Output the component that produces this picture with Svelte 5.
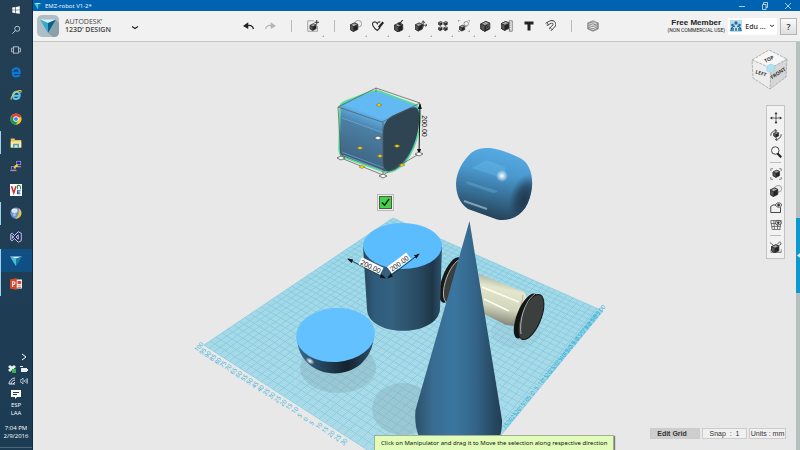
<script>
  const apps = [
    { name: "Edge", icon: "edge" },
    { name: "Internet Explorer", icon: "ie" },
    { name: "Chrome", icon: "chrome" },
    { name: "File Explorer", icon: "folder", running: true },
    { name: "PuTTY", icon: "putty" },
    { name: "VNC Viewer", icon: "vnc" },
    { name: "Browser", icon: "ball", running: true },
    { name: "Visual Studio", icon: "vs" },
    { name: "123D Design", icon: "design", running: true, active: true },
    { name: "PowerPoint", icon: "ppt", running: true },
  ];

  const tools = [
    { name: "Undo", icon: "undo" },
    { name: "Redo", icon: "redo" },
    null,
    { name: "Transform", icon: "insert", menu: true },
    null,
    { name: "Primitives", icon: "primitives", menu: true },
    { name: "Sketch", icon: "sketch", menu: true },
    { name: "Construct", icon: "construct", menu: true },
    { name: "Modify", icon: "modify", menu: true },
    { name: "Pattern", icon: "pattern", menu: true },
    { name: "Grouping", icon: "group", menu: true },
    { name: "Combine", icon: "combine", menu: true },
    { name: "Measure", icon: "measure" },
    { name: "Text", icon: "text" },
    { name: "Snap", icon: "magnet" },
    null,
    { name: "Material", icon: "material" },
  ];

  const views = [
    { name: "Pan", icon: "pan" },
    { name: "Orbit", icon: "orbit" },
    { name: "Zoom", icon: "zoom" },
    null,
    { name: "Fit", icon: "fit" },
    { name: "Shading", icon: "primitives" },
    { name: "Show sketches", icon: "eye" },
    { name: "Grid visibility", icon: "gridview" },
    null,
    { name: "Snap to grid", icon: "snapview" },
  ];

  // corners of the work plane on screen: back, right, front, left
  const quad = [[393, 218], [603, 311], [447, 501], [204, 345]];

  // projective map from the unit square to the quad
  function project(u, v) {
    const [[x0, y0], [x1, y1], [x2, y2], [x3, y3]] = quad;
    const dx1 = x1 - x2, dx2 = x3 - x2, sx = x0 - x1 + x2 - x3;
    const dy1 = y1 - y2, dy2 = y3 - y2, sy = y0 - y1 + y2 - y3;
    const det = dx1 * dy2 - dx2 * dy1;
    const g = (sx * dy2 - dx2 * sy) / det;
    const h = (dx1 * sy - sx * dy1) / det;
    const w = g * u + h * v + 1;
    return [
      ((x1 - x0 + g * x1) * u + (x3 - x0 + h * x3) * v + x0) / w,
      ((y1 - y0 + g * y1) * u + (y3 - y0 + h * y3) * v + y0) / w,
    ];
  }

  function gridPath(count, skip) {
    let d = "";
    for (let i = 0; i <= count; i++) {
      if (skip && i % skip === 0) continue;
      const t = i / count;
      d += `M${project(t, 0)}L${project(t, 1)}M${project(0, t)}L${project(1, t)}`;
    }
    return d;
  }

  const minor = gridPath(160, 4);
  const major = gridPath(40);

  const ticks = [];
  for (let i = 0; i <= 40; i++) {
    const label = Math.abs(100 - i * 5);
    const [ax, ay] = project(i / 40, 1);
    const [bx, by] = project(1, i / 40);
    if (ay < 440) ticks.push({ label, x: ax - 7, y: ay + 7, angle: -48 });
    if (by < 428) ticks.push({ label, x: bx - 4, y: by + 4, angle: -50 });
  }

  const yellow = [[379, 105], [360, 148], [380, 156], [397, 146], [402, 165], [362, 167]];
  const corners = [[378, 138], [341, 158], [383, 176], [419, 154]];
</script>

{#snippet cube(x, y, s)}
  <g transform="translate({x} {y}) scale({s})">
    <path d="M0 3 6 0 11 2 11 9 5 12 0 9Z" fill="#222" />
    <path d="M0 3 6 0 11 2 5 5Z" fill="#aaa" />
    <path d="M0 3 5 5 5 12 0 9Z" fill="#555" />
  </g>
{/snippet}

{#snippet icon(name)}
  <svg class="icon" viewBox="0 0 16 16" fill="none" stroke="#333" aria-hidden="true">
    {#if name === "start"}
      <path fill="#fff" stroke="none" d="M2 4 7 3V7.600H2ZM8 3 14 2V7.600H8ZM2 8.400H7V13L2 12ZM8 8.400H14V14L8 13Z" />
    {:else if name === "search"}
      <g stroke="#d8e0e6" stroke-width="1.300"><circle cx="10" cy="6" r="4" /><path d="M7 9 2 14" /></g>
    {:else if name === "tasks"}
      <g stroke="#d8e0e6" stroke-width="1.200"><rect x="4" y="3" width="8" height="10" /><path d="M3 5H1V11H3M13 5H15V11H13" /></g>
    {:else if name === "edge"}
      <path d="M3 9H13C13 1 5 2 3 7M4 8C3 15 9 15 13 12" stroke="#0a78d7" stroke-width="3" />
    {:else if name === "ie"}
      <path d="M4 9H13C13 2 4 2 4 8.500S10 14 13 11" stroke="#5ac8f2" stroke-width="2.600" />
      <path d="M2 14C-1 12 9 1 14 2C16 3 14 5 14 5" stroke="#f5c83a" stroke-width="1.400" />
    {:else if name === "chrome"}
      <g stroke="none">
        <circle cx="8" cy="8" r="7.500" fill="#f2c52c" />
        <path fill="#db4437" d="M1.500 4.300A7.500 7.500 0 0 1 15 5.500H8L5 10Z" />
        <path fill="#179c52" d="M1.500 4.300A7.500 7.500 0 0 0 7.500 15.500L11 10H6Z" />
        <circle cx="8" cy="8" r="3.600" fill="#fff" /><circle cx="8" cy="8" r="2.700" fill="#4285f4" />
      </g>
    {:else if name === "folder"}
      <g stroke="none"><path fill="#e8c35a" d="M1 2H6L7 4H15V14H1Z" /><path fill="#ffe9a0" d="M1 6H15V14H1Z" /><path fill="#2ea6de" d="M4 9H12V14H10V11H6V14H4Z" /></g>
    {:else if name === "putty"}
      <g stroke="#222" stroke-width=".6" fill="#bcbcc4">
        <rect x="8" y="1" width="7" height="6" /><rect x="1" y="8" width="7" height="5" /><path d="M7 8H15V10H7ZM0 13H9V15H0Z" />
      </g>
      <path fill="#2026b8" stroke="none" d="M9 2H14V6H9ZM2 9H7V12H2Z" /><path stroke="#f4e22a" stroke-width="1.500" d="M10 6 7 8 9 8 5 11" />
    {:else if name === "vnc"}
      <rect x="0" y="0" width="16" height="16" fill="#fff" stroke="none" />
      <path stroke="#d92b2b" stroke-width="2" d="M2 3 5 12 8 3" /><path stroke="#2a9d46" stroke-width="1.500" d="M10 7V2C14 1 14 3 14 7" /><path stroke="#2650b8" stroke-width="1.500" d="M14 9H10V13H14M10 11H13" />
    {:else if name === "ball"}
      <g stroke="none"><circle cx="8" cy="8" r="7.500" fill="#6f93d0" /><path fill="#f0c62e" d="M12 2C17 6 16 15 7 15.500C12 12 12 8 12 2Z" /><ellipse cx="6" cy="5" rx="4" ry="3" fill="#dce7f8" /><circle cx="6" cy="10" r="2" fill="#a9c0e8" /></g>
    {:else if name === "vs"}
      <path fill="#1c2864" stroke="#e6e9f4" stroke-width="1.100" d="M11 1 15 3V13L11 15 6 10 3 13 1 12V4L3 3 6 6ZM11 5 8 8 11 11ZM3 6V10L5 8Z" />
    {:else if name === "design"}
      <g stroke="none"><path fill="#d2f1fa" d="M0 2H16L8 5Z" /><path fill="#4bbfe0" d="M0 2 8 5V15Z" /><path fill="#107ea8" d="M16 2 8 5V15Z" /></g>
    {:else if name === "ppt"}
      <g stroke="none"><rect x="7" y="2" width="9" height="12" fill="#fff" /><path fill="#d8472b" d="M0 2 9 0V16L0 14ZM10 4H15V8H10ZM10 10H15V11H10ZM10 12H15V13H10Z" /></g>
      <path stroke="#fff" stroke-width="1.400" d="M3.500 12V5H5C7.500 5 7.500 9 3.500 9" />
    {:else if name === "undo" || name === "redo"}
      <g transform={name === "redo" ? "translate(16 0) scale(-1 1)" : undefined} stroke={name === "redo" ? "#b5b5b5" : "#222"}>
        <path stroke-width="1.700" d="M4 8C9 6 13 7 14 12" /><path fill={name === "redo" ? "#b5b5b5" : "#222"} stroke="none" d="M0 8 7 3V12Z" />
      </g>
    {:else if name === "insert"}
      <path d="M9 1H1V15H14V8" stroke="#888" />{@render cube(4, 5, 0.75)}<path stroke-width="1.300" d="M13 0V6M10 3H16" />
    {:else if name === "primitives"}
      <circle cx="11" cy="5" r="4.500" stroke="#888" fill="#eee" />{@render cube(0, 4, 0.95)}
    {:else if name === "sketch"}
      <path stroke-width="1.500" d="M7 14C2 11-1 5 2 3 5 1 7 5 7 5S9 1 11 3M7 14 11 10" /><path stroke="#222" stroke-width="3" d="M9 10 15 3" />
    {:else if name === "construct"}
      {@render cube(2, 4, 1)}<path stroke="#222" stroke-width="1.500" d="M8 6 13 0M8 3V6H11" />
    {:else if name === "modify"}
      {@render cube(0, 4, 0.9)}<path stroke="#222" d="M9 7H16M14 5 16 7 14 9M11 10V2M9 4 11 1 13 4" />
    {:else if name === "pattern"}
      {@render cube(2, 2, 0.45)}{@render cube(9, 2, 0.45)}{@render cube(2, 9, 0.45)}{@render cube(9, 9, 0.45)}
    {:else if name === "group"}
      {@render cube(2, 7, 0.65)}<circle cx="11" cy="5" r="3" stroke="#777" /><path stroke="#777" d="M0 3V0H3M13 0H16V3M0 13V16H3M13 16H16V13M8 10 12 8" />
    {:else if name === "combine"}
      {@render cube(1, 2, 1.100)}<path stroke="#999" stroke-width=".7" d="M9 8 12 6V10L9 12Z" />
    {:else if name === "measure"}
      {@render cube(0, 2, 1)}<path fill="#eee" stroke="#666" d="M11 1H15V15H11ZM11 4H13M11 7H13M11 10H13M11 13H13" />
    {:else if name === "text"}
      <path fill="#222" stroke="none" d="M2 2H14V6H10V14H6V6H2Z" />
    {:else if name === "magnet"}
      <path stroke="#444" stroke-width="4.500" d="M3 6 8 3C13 1 16 6 12 9L8 13" /><path stroke="#f4f4f4" stroke-width="2.500" d="M3 6 8 3C13 1 16 6 12 9L8 13" /><path stroke="#333" d="M4 3 6 7M8 10 11 13" />
    {:else if name === "material"}
      <path fill="#bbb" stroke="#666" stroke-width=".8" d="M1 4 8 1 15 4V12L8 15 1 12ZM1 4 8 7 15 4M1 7 8 9 15 6M1 9 8 12 15 8M1 11 8 14 15 10M4 3 11 6" />
    {:else if name === "pan"}
      <path d="M8 1V15M1 8H15" /><path fill="#333" stroke="none" d="M8 0 10 3H6ZM8 16 10 13H6ZM0 8 3 6V10ZM16 8 13 6V10Z" />
    {:else if name === "orbit"}
      {@render cube(5, 4, 0.6)}<path stroke-width="1.100" d="M1 9C1 5 4 2 8 2M15 7C15 11 12 14 8 14M6 0 9 2 7 4M10 16 7 14 9 12" />
    {:else if name === "zoom"}
      <circle cx="7" cy="6" r="5" stroke-width="1.200" fill="#fafafa" /><path stroke="#222" stroke-width="3" d="M10 10 15 15" />
    {:else if name === "fit"}
      {@render cube(4, 3, 0.8)}<path stroke="#666" d="M1 4V1H4M12 1H15V4M1 12V15H4M12 15H15V12" />
    {:else if name === "eye"}
      <path d="M1 14V6L4 4H7M14 7V14H1" stroke-width="1.200" /><path fill="#ddd" d="M7 4C9 0 14 0 16 4C14 8 9 8 7 4Z" /><circle cx="11.500" cy="4" r="1.500" fill="#333" />
    {:else if name === "gridview"}
      <path stroke="#555" d="M1 2H15M1 6H15M2 10H14M3 14H14M1 2 3 14M5 2 6 14M10 2V14M15 2 13 14" /><ellipse cx="11" cy="5" rx="4" ry="3" fill="#ddd" /><circle cx="11" cy="5" r="1.200" fill="#333" />
    {:else if name === "snapview"}
      {@render cube(2, 5, 0.9)}<path d="M0 1V4M2 3 4 6M9 5 13 1 15 4 11 7ZM1 15H15" /><path stroke="#777" d="M0 11V15M15 11V15" />
    {/if}
  </svg>
{/snippet}

<div class="desktop">
  <aside class="taskbar">
    <div class="system">
      <button aria-label="Start">{@render icon("start")}</button>
      <button aria-label="Search">{@render icon("search")}</button>
      <button aria-label="Task view">{@render icon("tasks")}</button>
    </div>
    <div class="apps">
      {#each apps as app}
        <button class:running={app.running} class:active={app.active} aria-label={app.name}>
          {@render icon(app.icon)}
        </button>
      {/each}
    </div>
    <div class="tray">
      <svg class="more" viewBox="0 0 8 8"><path d="M2 1 6 4 2 7" fill="none" stroke="#fff" /></svg>
      <div class="status">
        <svg viewBox="0 0 8 8">
          <path fill="#e8eef2" d="M0 2 2 0 4 1.500 6 0 8 2 6 3.500 8 5 6 7 4 5 2 7 0 5 2 3.500Z" /><rect x="4" y="4" width="4" height="4" fill="#38b54a" />
        </svg>
        <svg viewBox="0 0 8 8"><path fill="#e8eef2" d="M1 3H7V4H8V6H7V7H1ZM0 1H3V2H0Z" /></svg>
        <svg viewBox="0 0 8 8"><path fill="none" stroke="#dde5ea" d="M1 7C1 4 4 1 7 1M3 7C3 5 5 3 7 3M5 7 7 5M1 7H7" /></svg>
        <svg viewBox="0 0 8 8"><path fill="none" stroke="#dde5ea" stroke-width=".7" d="M0 3H1L3 1V7L1 5H0ZM4.500 3Q5.200 4 4.500 5M5.800 2Q7 4 5.800 6M7 1Q8.500 4 7 7" /></svg>
      </div>
      <svg class="notes" viewBox="0 0 10 10"><path fill="#fff" d="M0 1H10V8H6L4 10V8H0Z" /><path stroke="#1c3c54" d="M2 3.500H8M2 5.500H6" /></svg>
      <span>ESP</span>
      <span>LAA</span>
      <time>7:04 PM<br />2/9/2016</time>
    </div>
  </aside>

  <main>
    <div class="titlebar">
      {@render icon("design")}
      <span>EMZ-robot V1-2*</span>
      <div class="controls">
        <button aria-label="Minimize"><svg viewBox="0 0 8 8"><path d="M1 4.500H7" /></svg></button>
        <button aria-label="Restore"><svg viewBox="0 0 8 8"><path d="M2.500 2.500V.5H6.500V5.500H5M1.500 2.500H5V7.500H1.500Z" /></svg></button>
        <button aria-label="Close"><svg viewBox="0 0 8 8"><path d="M1 1 7 7M7 1 1 7" /></svg></button>
      </div>
    </div>

    <header>
      <div class="brand">
        <svg class="logo" viewBox="0 0 22 22">
          <rect width="22" height="22" rx="5" fill="#aebec6" />
          <path d="M19 5 22 8V17Q22 22 17 22H16L11 18Z" fill="#8ba0ab" />
          <path d="M3 4.500H19L11 8Z" fill="#d9f2f9" />
          <path d="M3 4.500 11 8V18Z" fill="#39a9d0" />
          <path d="M19 4.500 11 8V18Z" fill="#08618b" />
        </svg>
        <p>AUTODESK’<br /><b>123D’ DESIGN</b></p>
        <button aria-label="Main menu"><svg viewBox="0 0 8 4"><path d="M1 .5 4 2.500 7 .5" /></svg></button>
      </div>
      <nav class="tools">
        {#each tools as tool}
          {#if tool}
            <button class:menu={tool.menu} aria-label={tool.name}>{@render icon(tool.icon)}</button>
          {:else}
            <i></i>
          {/if}
        {/each}
      </nav>
      <div class="account">
        <p><b>Free Member</b><small>(NON COMMERCIAL USE)</small></p>
        <button class="user">
          <svg class="avatar" viewBox="0 0 12 12">
            <rect width="12" height="12" fill="#b5dcee" />
            <path d="M1 11C1 7 3 6 6 6S11 7 11 11M3 11V8M9 11V8M6 11V8" stroke="#1d5684" stroke-width="1.200" fill="none" />
            <g fill="#28699a"><circle cx="6" cy="3" r="1.700" /><circle cx="2.500" cy="5" r="1.300" /><circle cx="9.500" cy="5" r="1.300" /></g>
            <circle cx="6" cy="6" r="1" fill="#e9f7fc" />
          </svg>
          Edu ...
          <svg class="chevron" viewBox="0 0 6 4"><path d="M1 1 3 2.500 5 1" /></svg>
        </button>
        <button class="help">?</button>
      </div>
    </header>

    <div class="workspace">
      <div class="canvas">
        <svg class="scene" viewBox="33 42 763 408" preserveAspectRatio="xMinYMin slice">
          <defs>
            <linearGradient id="cyl"><stop offset="0" stop-color="#28475d" /><stop offset=".15" stop-color="#2f5c7c" /><stop offset=".35" stop-color="#33617f" /><stop offset=".7" stop-color="#294a62" /><stop offset=".88" stop-color="#1f3648" /><stop offset="1" stop-color="#2d536f" /></linearGradient>
            <linearGradient id="cone"><stop offset="0" stop-color="#2c516c" /><stop offset=".2" stop-color="#386c92" /><stop offset=".45" stop-color="#3b76a0" /><stop offset=".7" stop-color="#336488" /><stop offset="1" stop-color="#213d52" /></linearGradient>
            <linearGradient id="bowl"><stop offset="0" stop-color="#376b91" /><stop offset=".3" stop-color="#264761" /><stop offset=".65" stop-color="#15222d" /><stop offset="1" stop-color="#2d526d" /></linearGradient>
            <linearGradient id="side" gradientUnits="userSpaceOnUse" x1="365" y1="112" x2="347" y2="159"><stop offset="0" stop-color="#63b9f2" /><stop offset=".12" stop-color="#579fd0" /><stop offset=".3" stop-color="#4a7fa5" /><stop offset=".7" stop-color="#446f8f" /><stop offset=".9" stop-color="#3f698a" /><stop offset="1" stop-color="#2e506c" /></linearGradient>
            <linearGradient id="blob" x1=".6" x2=".4" y2="1"><stop offset="0" stop-color="#57ade6" /><stop offset=".35" stop-color="#4a98ce" /><stop offset=".65" stop-color="#376e94" /><stop offset="1" stop-color="#20394c" /></linearGradient>
            <linearGradient id="axle" x1=".6" x2=".4" y2="1"><stop offset="0" stop-color="#96998a" /><stop offset=".3" stop-color="#e4e7ce" /><stop offset=".65" stop-color="#d2d6bd" /><stop offset="1" stop-color="#77796e" /></linearGradient>
            <radialGradient id="shine"><stop offset="0" stop-color="#fff" /><stop offset="1" stop-color="#fff" stop-opacity="0" /></radialGradient>
            <radialGradient id="shade"><stop offset="0" stop-color="#21394b" /><stop offset=".5" stop-color="#23405a" stop-opacity=".8" /><stop offset="1" stop-color="#2a4d68" stop-opacity="0" /></radialGradient>
            <marker id="arrow" viewBox="0 0 6 6" refX="5" refY="3" markerWidth="6" markerHeight="6" orient="auto-start-reverse"><path d="M0 1 6 3 0 5Z" fill="#111" /></marker>
            <clipPath id="blobclip"><path d="M488 148C498 148 512 154 520 158C530 163 533 176 532 187C530 204 523 215 510 219C503 221 497 220 493 218L468 209C459 203 456 193 456 183C457 170 463 161 471 153C476 149 482 148 488 148Z" /></clipPath>
          </defs>

          <!-- work plane -->
          <polygon points={quad.join(" ")} fill="#b9dfe9" />
          <path d={minor} stroke="#4fc0df" stroke-width=".4" opacity=".4" />
          <path d={major} stroke="#35b4dc" stroke-width=".6" opacity=".6" />
          <g class="ticks">
            {#each ticks as t}
              <text transform="translate({t.x} {t.y}) rotate({t.angle})">{t.label}</text>
            {/each}
          </g>

          <g fill="#7a9ea8" opacity=".3">
            <ellipse cx="338" cy="368" rx="38" ry="25" />
            <ellipse cx="403" cy="409" rx="31" ry="26" />
          </g>
          <ellipse cx="516" cy="332" rx="25" ry="16" fill="#7a9ea8" opacity=".13" />

          <!-- wheels and axle -->
          <ellipse cx="451" cy="280" rx="9" ry="24" transform="rotate(20 451 280)" fill="#161818" />
          <ellipse cx="455" cy="281" rx="9" ry="23" transform="rotate(20 455 281)" fill="#3b403e" stroke="#ddd" stroke-width=".7" />
          <path d="M479 274 519 290C524 291 527 295 527 299 526 309 521 322 513 326L506 325 482 313Z" fill="url(#axle)" />
          <path d="M482 287 519 302M484 299 509 311" stroke="#fdfff0" stroke-width="1.500" fill="none" />
          <path d="M523 295C522 307 516 320 509 325" stroke="#858977" opacity=".5" fill="none" />
          <ellipse cx="526" cy="316" rx="9" ry="24" transform="rotate(22 526 316)" fill="#131515" />
          <ellipse cx="531" cy="317" rx="10" ry="24" transform="rotate(22 531 317)" fill="#3b403e" stroke="#151515" />
          <path d="M535 294C524 301 519 322 521 334" stroke="#e0e0e0" stroke-width=".7" fill="none" />

          <path d="M363 246 367 309C368 338 438 338 440 309L442 246Z" fill="url(#cyl)" />
          <ellipse cx="402.500" cy="246" rx="39.500" ry="23" fill="#5bbdfd" />

          <path d="M297 339C300 385 371 386 374 335Z" fill="url(#bowl)" />
          <ellipse cx="310" cy="361" rx="5" ry="3" transform="rotate(35 310 361)" fill="url(#shine)" />
          <ellipse cx="335.500" cy="335" rx="39.500" ry="27" transform="rotate(-4 335 335)" fill="#62c1fe" />

          <path d="M469.500 221 415.500 410C412 450 440 460 460 460 485 458 503 448 502 420Z" fill="url(#cone)" />

          <g clip-path="url(#blobclip)">
            <rect x="456" y="147" width="77" height="75" fill="url(#blob)" />
            <ellipse cx="524" cy="200" rx="15" ry="27" transform="rotate(17 524 200)" fill="url(#shade)" />
            <path d="M466 181 495 190Q501 192 493 193L467 184ZM472 168 499 177Q507 176 505 167L486 160" fill="#75c3f3" opacity=".3" />
            <path d="M464 201 487 209" stroke="#b9d4e5" stroke-width="2" opacity=".6" />
            <circle cx="502" cy="176" r="6" fill="url(#shine)" />
          </g>

          <!-- selected solid -->
          <path d="M340 108Q339 104 346 101L372 91 379 91 416 105Q421 108 420 121C418 146 406 169 390 172L384 172 343 157Q339 155 339 149Z" fill="url(#side)" stroke="#57df92" stroke-width="1.500" />
          <path d="M342 118 384 133M342 152 384 168" stroke="#86bde2" opacity=".5" />
          <path d="M343 155 384 171" stroke="#e1edf5" stroke-width=".7" opacity=".6" />
          <path d="M383 134C383 123 387 118 396 114L410 108Q418 105 419 113L419 123C417 145 405 164 393 170Q383 174 383 161Z" fill="#304554" />
          <path d="M338 107 376 88 420 103 382 122ZM338 107 341 158 383 175V122M376 88V92M383 175 419 154" fill="none" stroke="#555" stroke-width=".7" />
          <path d="M420 104 419 154" stroke="#111" marker-start="url(#arrow)" marker-end="url(#arrow)" />
          {#each yellow as [x, y]}
            <path d="M{x - 3} {y} {x} {y - 1.500} {x + 3} {y} {x} {y + 1.500}Z" fill="#f5d51f" stroke="#796b18" stroke-width=".5" />
          {/each}
          {#each corners as [x, y]}
            <path d="M{x - 4} {y} {x} {y - 2} {x + 4} {y} {x} {y + 2}Z" fill="#fff" stroke="#444" stroke-width=".7" />
          {/each}

          <!-- dimensions -->
          <path d="M348 259 385 278" stroke="#174054" marker-start="url(#arrow)" marker-end="url(#arrow)" />
          <path d="M388 278 419 254" stroke="#174054" marker-start="url(#arrow)" marker-end="url(#arrow)" />
          <g class="dimension">
            <g transform="translate(371 266) rotate(26)"><rect x="-12" y="-4" width="24" height="8" /><text y="3">200.00</text></g>
            <g transform="translate(399 263) rotate(-37)"><rect x="-12" y="-4" width="24" height="8" /><text y="3">200.00</text></g>
            <text transform="translate(422 126) rotate(90)">200.00</text>
          </g>
        </svg>

        <button class="confirm" aria-label="Apply"><svg viewBox="0 0 12 12"><path d="M2 6 5 9 10 2" /></svg></button>

        <svg class="viewcube" viewBox="0 0 40 44">
          <path d="M3 14 20 4 38 13 37 31 21 43 4 32Z" fill="#ddd" />
          <path d="M3 14 20 4 38 13 22 22Z" fill="#f6f6f6" />
          <path d="M3 14 22 22 21 43 4 32Z" fill="#ededed" />
          <path d="M38 13 22 22 21 43 37 31Z" fill="#d6d6d6" />
          <path d="M3 14 20 4 38 13 37 31 21 43 4 32ZM3 14 22 22 38 13M22 22 21 43" fill="none" stroke="#999" stroke-width=".7" stroke-dasharray="3 1" />
          <text transform="translate(20 13) rotate(-28)" y="2">TOP</text>
          <text transform="translate(12 27) rotate(18)" y="2">LEFT</text>
          <text transform="translate(29 27) rotate(-33)" y="2">FRONT</text>
          <path d="M18 20 22 18 26 20 25 25 22 27 18 25Z" fill="#b4e2f2" stroke="#8fcde2" stroke-width=".6" />
        </svg>

        <nav class="views">
          {#each views as view}
            {#if view}
              <button aria-label={view.name}>{@render icon(view.icon)}</button>
            {:else}
              <hr />
            {/if}
          {/each}
        </nav>

        <div class="hint" role="status">Click on Manipulator and drag it to Move the selection along respective direction</div>

        <div class="settings">
          <button class="edit">Edit Grid</button>
          <button class="snap">Snap &nbsp;: &nbsp;1</button>
          <button class="units">Units : mm</button>
        </div>
      </div>
      <div class="drawer">
        <button aria-label="Open parts panel"><svg viewBox="0 0 4 6"><path d="M4 0 0 3 4 6Z" fill="#fff" /></svg></button>
      </div>
    </div>
  </main>
</div>

<style>
  :global(body) {
    margin: 0;
    overflow: hidden;
  }

  .desktop {
    display: flex;
    height: 100vh;
    font-family: "Open Sans", "Noto Sans", sans-serif;
    font-size: 7px;
    color: #333;
  }

  button {
    display: flex;
    align-items: center;
    justify-content: center;
    padding: 0;
    border: 0;
    background: none;
    color: inherit;
    font: inherit;
  }

  svg {
    display: block;
  }

  p {
    margin: 0;
  }

  .icon {
    width: 12px;
    height: 12px;
  }

  .taskbar {
    flex: none;
    display: flex;
    flex-direction: column;
    box-sizing: border-box;
    width: 33px;
    border-right: 1px solid #102c42;
    background: linear-gradient(#243f53, #1c3c54);
    color: #fff;
  }

  .system button {
    width: 100%;
    height: 20px;
  }

  .system .icon {
    width: 10px;
    height: 10px;
  }

  .apps {
    display: grid;
    grid-template-rows: repeat(10, 1fr);
    height: 236px;
  }

  .apps button {
    border-left: 1px solid transparent;
    border-right: 1px solid transparent;
  }

  .apps .running {
    border-left-color: #9bd3ee;
  }

  .apps .active {
    background: #0f4f83;
  }

  .tray {
    display: flex;
    flex-direction: column;
    align-items: center;
    margin-top: auto;
    font-size: 6px;
    line-height: 8px;
    text-align: center;
    border-bottom: 1px solid #4d6878;
    margin-bottom: 2px;
    padding-bottom: 7px;
  }

  .more {
    width: 8px;
    height: 8px;
    margin: 0 4px 4px auto;
  }

  .status {
    display: grid;
    grid-template-columns: 8px 8px;
    gap: 4px;
    margin: 0 0 4px 4px;
  }

  .notes {
    width: 10px;
    height: 10px;
    margin-bottom: 2px;
  }

  .tray time {
    margin-top: 7px;
  }

  main {
    flex: 1;
    display: flex;
    flex-direction: column;
    min-width: 0;
    background: #e8e8e8;
  }

  .titlebar {
    display: flex;
    align-items: center;
    gap: 3px;
    height: 11px;
    padding-left: 1px;
    background: #0063b1;
    color: #fff;
    font-size: 6px;
  }

  .titlebar .icon {
    width: 8px;
    height: 8px;
  }

  .controls {
    display: flex;
    gap: 15px;
    margin-left: auto;
    padding-right: 8px;
  }

  .controls svg {
    width: 8px;
    height: 8px;
    fill: none;
    stroke: #d4e6f5;
    stroke-width: 0.8;
  }

  header {
    display: flex;
    align-items: center;
    box-sizing: border-box;
    height: 31px;
    border-bottom: 1px solid #c6c8c8;
    background: #f1f1f1;
  }

  .brand {
    display: flex;
    align-items: center;
    width: 205px;
    padding-left: 4px;
    box-sizing: border-box;
    line-height: 8px;
    color: #444;
  }

  .brand p {
    width: 66px;
    white-space: nowrap;
  }

  .brand b {
    font-weight: 600;
  }

  .logo {
    width: 22px;
    height: 22px;
    margin-right: 6px;
  }

  .brand button {
    padding-top: 4px;
  }

  .brand button svg {
    width: 8px;
    height: 4px;
    fill: none;
    stroke: #222;
    stroke-width: 1.2;
  }

  .tools {
    display: grid;
    grid-template-columns: repeat(17, 1fr);
    align-items: center;
    width: 366px;
    height: 28px;
  }

  .tools button {
    height: 28px;
  }

  .tools i {
    justify-self: center;
    width: 1px;
    height: 12px;
    background: #bbb;
  }

  .menu {
    position: relative;
  }

  .menu::after {
    content: "";
    position: absolute;
    right: 0;
    bottom: 3px;
    border: 1px solid #aaa;
    border-top-color: transparent;
    border-left-color: transparent;
  }

  .account {
    display: flex;
    align-items: center;
    gap: 3px;
    margin-left: auto;
    padding-right: 3px;
  }

  .account p {
    display: grid;
    justify-items: center;
    font-family: "Liberation Sans", Arial, sans-serif;
    font-size: 8px;
    line-height: 8px;
    color: #222;
  }

  .account small {
    font-family: Roboto, sans-serif;
    font-size: 5px;
    line-height: 6px;
  }

  .user {
    justify-content: space-between;
    box-sizing: border-box;
    width: 49px;
    height: 17px;
    padding: 0 2px;
    background: #fff;
    font-weight: 600;
  }

  .avatar {
    width: 12px;
    height: 12px;
  }

  .chevron {
    width: 6px;
    height: 4px;
    fill: none;
    stroke: #333;
  }

  .help {
    box-sizing: border-box;
    width: 17px;
    height: 17px;
    border: 1px solid #b4b4b4;
    background: linear-gradient(#fafafa, #dedede);
    font-size: 9px;
    font-weight: 600;
  }

  .workspace {
    flex: 1;
    display: flex;
    min-height: 0;
  }

  .canvas {
    flex: 1;
    position: relative;
    overflow: hidden;
  }

  .scene {
    position: absolute;
    width: 100%;
    height: 100%;
  }

  .ticks text {
    fill: #27aed8;
    font-size: 6px;
  }

  .dimension {
    font-family: "Liberation Sans", Arial, sans-serif;
    font-size: 7px;
    text-anchor: middle;
    fill: #111;
  }

  .dimension rect {
    fill: #fff;
  }

  .confirm {
    position: absolute;
    left: 344px;
    top: 152px;
    box-sizing: border-box;
    width: 17px;
    height: 17px;
    border: 1px solid #bbb;
    background: #eee;
  }

  .confirm svg {
    width: 11px;
    height: 11px;
    border: 1px solid #555;
    background: #40d546;
    fill: none;
    stroke: #111;
    stroke-width: 1.5;
  }

  .viewcube {
    position: absolute;
    top: 4px;
    right: 7px;
    width: 40px;
    height: 44px;
  }

  .viewcube text {
    font-size: 5px;
    font-weight: 700;
    text-anchor: middle;
    fill: #333;
  }

  .views {
    position: absolute;
    top: 63px;
    right: 11px;
    display: flex;
    flex-direction: column;
    align-items: center;
    box-sizing: border-box;
    width: 19px;
    padding: 3px 0;
    border: 1px solid #c4c4c4;
    background: #f2f2f2;
  }

  .views button {
    height: 17px;
  }

  .views hr {
    width: 11px;
    height: 1px;
    margin: 2px 0;
    border: 0;
    background: #bbb;
  }

  .hint {
    position: absolute;
    left: 341px;
    bottom: 0;
    padding: 0 6px;
    border: 1px solid #a5ad92;
    border-bottom: 0;
    background: #e2fdb9;
    box-shadow: 1px 1px 1px #777;
    font-size: 6px;
    line-height: 14px;
    color: #111;
    font-family: "Noto Sans", sans-serif;
    white-space: nowrap;
  }

  .settings {
    position: absolute;
    right: 10px;
    bottom: 11px;
    display: flex;
    gap: 2px;
    font-family: "Liberation Sans", Arial, sans-serif;
  }

  .settings button {
    box-sizing: border-box;
    height: 11px;
    border: 1px solid #ccc;
    background: #f0f0f0;
    white-space: nowrap;
  }

  .settings .edit {
    width: 50px;
    padding-right: 6px;
    background: #cecece;
    font-weight: 700;
  }

  .settings .snap {
    width: 45px;
  }

  .settings .units {
    width: 37px;
  }

  .drawer {
    display: flex;
    width: 4px;
    background: #b6c0be;
  }

  .drawer button {
    width: 4px;
    height: 75px;
    margin-top: 176px;
    background: #0c99cf;
  }

  .drawer svg {
    width: 3px;
    height: 5px;
  }
</style>
